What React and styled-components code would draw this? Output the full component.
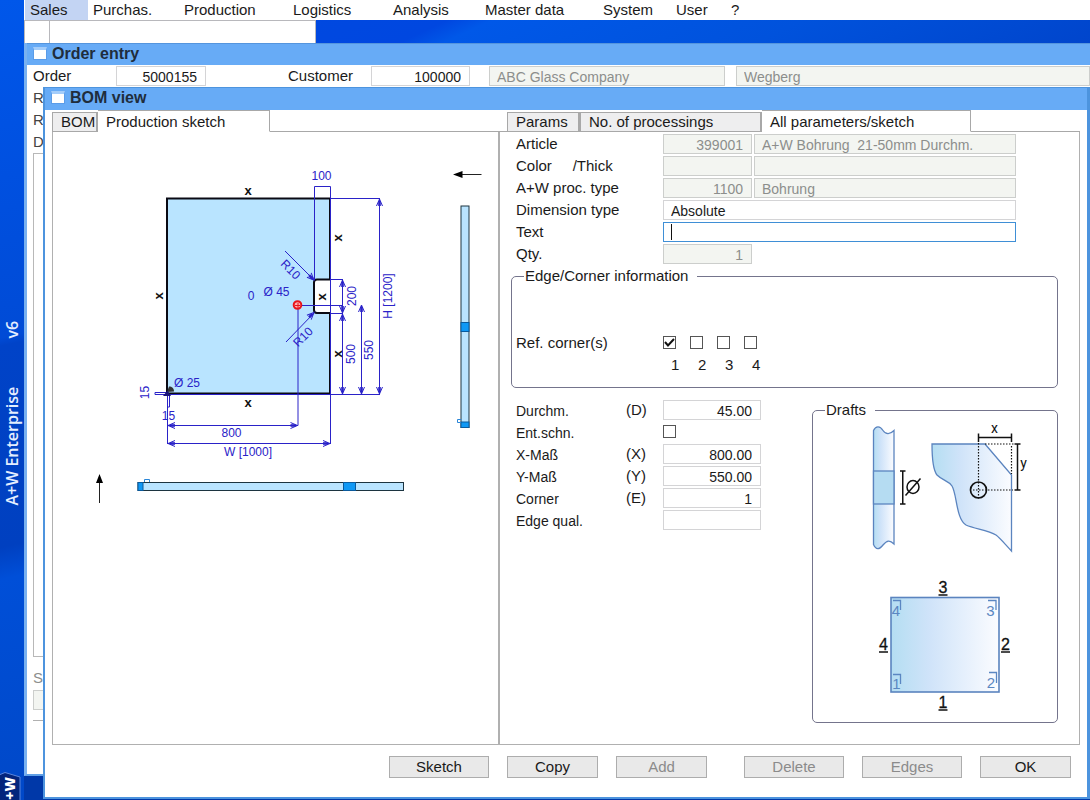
import React from "react";
import styled, { createGlobalStyle } from "styled-components";

const GlobalStyle = createGlobalStyle`
  *, *::before, *::after { box-sizing: border-box; }
  body {
    margin: 0;
    font-family: "Liberation Sans", Arial, sans-serif;
    font-size: 15px;
    line-height: 20px;
    color: #1a1a1a;
    background: #0048d0;
  }
  button, input, select { font: inherit; color: inherit; margin: 0; }
`;

/* ---------- desktop ---------- */

const Desktop = styled.div`
  display: flex;
  min-height: 100vh;
  overflow: hidden;
`;

const Sidebar = styled.aside`
  flex: none;
  width: 24px;
  display: flex;
  flex-direction: column;
  align-items: center;
  justify-content: flex-end;
  color: #fff;
  background: linear-gradient(168deg, #0057ea 0%, #0050e0 22%, #004bd6 42%, #0043c8 43%, #0040c0 68%, #004fd8 72%, #0048c8 100%);
`;

const SideCaption = styled.div`
  display: flex;
  gap: 48px;
  writing-mode: vertical-rl;
  transform: rotate(180deg);
  font-family: "Open Sans", sans-serif;
  font-weight: 600;
  font-size: 16px;
  line-height: 24px;
  color: #e4eeff;
  margin-bottom: 266px;
`;

const Workspace = styled.div`
  flex: 1;
  min-width: 0;
  display: flex;
  flex-direction: column;
`;

const MenuBar = styled.nav`
  display: flex;
  height: 20px;
  padding-left: 1px;
  background: #fff;
`;

const MenuItem = styled.button`
  border: 0;
  padding: 0 0 0 5px;
  width: ${(p) => p.$width}px;
  text-align: left;
  line-height: 20px;
  white-space: nowrap;
  background: ${(p) => (p.$active ? "#c3d4f3" : "transparent")};
`;

const ToolStrip = styled.div`
  display: flex;
  height: 23px;
  background: linear-gradient(155deg, #004ce0 0%, #0047e0 38%, #0058e8 42%, #0052dc 70%, #0045cc 100%);
`;

const ToolBox = styled.div`
  width: ${(p) => p.$width}px;
  border: 1px solid #b8b8bc;
  border-width: 1px 1px 0 1px;
  background: #fff;
  & + & { border-left: 0; }
`;

const WindowStack = styled.main`
  flex: 1;
  display: grid;
  grid-template-columns: minmax(0, 1fr);
  background: #0038a8;
  & > * { grid-area: 1 / 1; }
`;

/* ---------- windows ---------- */

const OrderWindow = styled.section`
  display: flex;
  flex-direction: column;
  min-width: 0;
  margin-bottom: 24px;
  background: #fff;
  border-left: 3px solid #79b1f0;
  border-bottom: 2px solid #5f9fe6;
  overflow: hidden;
`;

const BomWindow = styled.section`
  display: flex;
  flex-direction: column;
  min-width: 0;
  margin: 44px 0 1px 19px;
  background: #fff;
  border: solid #4d94de;
  border-width: 1px 3px 2px 2px;
  z-index: 1;
`;

const TitleBar = styled.header`
  display: flex;
  flex: none;
  gap: 5px;
  height: 22px;
  padding-left: ${(p) => p.$inset}px;
  border-top: ${(p) => (p.$edge ? "1px solid #5595dd" : "0")};
  background: #67abf6;
`;

const WindowIcon = styled.span`
  width: 14px;
  height: 13px;
  margin-top: 3px;
  background: #fff;
  border: 1px solid #5b9ce8;
  border-top: 3px solid #a4cdfa;
`;

const Title = styled.h1`
  margin: 0;
  font-size: 16px;
  line-height: 20px;
  font-weight: 700;
  color: #1f2d3c;
`;

const Input = styled.input`
  min-width: 0;
  width: 100%;
  height: 20px;
  padding: 2px 8px 0 7px;
  border: 1px solid #d4d4d6;
  border-radius: 0;
  outline: 0;
  font-size: 14px;
  line-height: 16px;
  text-align: ${(p) => (p.$right ? "right" : "left")};
  background: #fff;
  &:disabled {
    color: #8c8e8c;
    background: #f3f5f1;
    border-color: #cccecc;
    opacity: 1;
  }
`;

const FocusedInput = styled(Input)`
  border-color: #3f8fd6;
  caret-color: transparent;
  background: linear-gradient(#111, #111) 7px 1px / 1px 16px no-repeat #fff;
`;

const Select = styled.select`
  appearance: none;
  width: 100%;
  height: 20px;
  padding: 2px 7px 0;
  border: 1px solid #d4d4d6;
  border-radius: 0;
  font-size: 14px;
  line-height: 16px;
  background: #fff;
`;

const OrderHeader = styled.div`
  display: grid;
  flex: none;
  grid-template-columns: 83px 90px 82px 83px 99px 19px 236px 11px minmax(0, 1fr);
  align-items: center;
  height: 22px;
  padding-left: 6px;
  & > :nth-child(3) { grid-column: 4; }
  & > :nth-child(5) { grid-column: 7; }
  & > :nth-child(6) { grid-column: 9; }
`;

const OrderLabel = styled.div`
  flex: none;
  height: 22px;
  line-height: 22px;
  padding-left: 6px;
  color: ${(p) => (p.$muted ? "#8c8e8c" : "#444")};
`;

const OrderList = styled.div`
  flex: 1;
  margin: 0 0 10px 6px;
  border: 1px solid #b8b8b8;
`;

const OrderFooter = styled.div`
  flex: none;
  height: 31px;
  margin: 1px 0 53px 6px;
  border-bottom: 1px solid #b0b0b0;
`;

/* ---------- BOM window body ---------- */

const Panes = styled.div`
  flex: 1;
  display: flex;
  padding: 0 7px;
`;

const Pane = styled.div`
  display: flex;
  flex-direction: column;
  min-width: 0;
  flex: ${(p) => (p.$grow ? "1 1 0" : "0 1 446px")};
`;

const TabRow = styled.div`
  display: flex;
  align-items: flex-end;
  height: 22px;
  &::before {
    content: "";
    align-self: stretch;
    width: ${(p) => p.$lead}px;
    border-bottom: 1px solid #a8a8a8;
  }
  &::after {
    content: "";
    flex: 1;
    align-self: stretch;
    border-bottom: 1px solid #a8a8a8;
  }
`;

const Tab = styled.button`
  flex: none;
  width: ${(p) => p.$width}px;
  height: ${(p) => (p.$active ? 22 : 20)}px;
  padding: ${(p) => (p.$active ? "2px 0 0 8px" : "0 0 0 8px")};
  border: 1px solid #a8a8a8;
  border-left-width: ${(p) => (p.$active ? 0 : 1)}px;
  border-bottom-color: ${(p) => (p.$active ? "#fff" : "#a8a8a8")};
  border-right-width: ${(p) => (p.$active ? 1 : 2)}px;
  text-align: left;
  line-height: 18px;
  white-space: nowrap;
  background: ${(p) => (p.$active ? "#fff" : "#eeeeef")};
`;

const SketchPanel = styled.div`
  flex: 1;
  border: solid #b0b0b0;
  border-width: 0 0 1px 1px;
  & > svg { display: block; }
`;

const ParamPanel = styled.div`
  flex: 1;
  padding: 2px 21px 20px 11px;
  border: solid #b0b0b0;
  border-width: 0 1px 1px 2px;
`;

const FieldGrid = styled.div`
  display: grid;
  grid-template-columns: 145px 89px minmax(0, 262px);
  gap: 2px;
  padding-left: 5px;
`;

const FieldLabel = styled.label`
  grid-column: 1;
  line-height: 20px;
  white-space: pre;
`;

const Wide = styled.div`
  display: flex;
  grid-column: 2 / 4;
`;

const Group = styled.fieldset`
  min-width: 0;
  margin: 0;
  padding: 0;
  border: 1px solid #74748c;
  border-radius: 5px;
`;

const Legend = styled.legend`
  margin-left: 12px;
  padding: 0 9px 0 1px;
  line-height: 20px;
`;

const EdgeGroup = styled(Group)`
  margin-top: 2px;
`;

const CornerRow = styled.div`
  display: grid;
  grid-template-columns: 147px repeat(4, 27px);
  padding: 47px 0 12px 4px;
`;

const CornerCell = styled.label`
  display: flex;
  flex-direction: column;
  & > span { padding: 3px 0 0 8px; }
`;

const Check = styled.input.attrs({ type: "checkbox" })`
  appearance: none;
  flex: none;
  width: 13px;
  height: 13px;
  margin: 3px 0;
  border: 1px solid #555;
  background: #fff;
  &:checked {
    background: url("data:image/svg+xml,%3Csvg xmlns='http://www.w3.org/2000/svg' viewBox='0 0 11 11'%3E%3Cpath d='M1 5l3 3.5L10 2' fill='none' stroke='%23111' stroke-width='2'/%3E%3C/svg%3E") center / 11px 11px no-repeat #fff;
  }
`;

const LowerArea = styled.div`
  display: flex;
  align-items: flex-start;
  gap: 51px;
  margin-top: 12px;
  padding-left: 5px;
`;

const DimensionGrid = styled.div`
  flex: none;
  display: grid;
  grid-template-columns: 110px 37px 98px;
  gap: 2px 0;
`;

const DimensionLabel = styled.label`
  grid-column: 1;
  font-size: 14px;
  line-height: 22px;
  height: 20px;
`;

const Code = styled.span`
  line-height: 20px;
`;

const ValueCell = styled.div`
  display: flex;
  grid-column: 3;
  height: 20px;
`;

const DraftGroup = styled(Group)`
  flex: 1;
  & > svg { display: block; margin: 0 auto; }
`;

const ButtonRow = styled.footer`
  display: flex;
  flex: none;
  justify-content: flex-end;
  gap: 37px;
  padding: 11px 16px 19px;
`;

const ButtonSet = styled.div`
  display: flex;
  gap: 18px;
`;

const ActionButton = styled.button`
  width: ${(p) => (p.$wide ? 100 : 91)}px;
  height: 22px;
  padding: 0;
  border: 1px solid #adadad;
  background: #e9e9e9;
  line-height: 20px;
  &:disabled { color: #8b8b8b; }
`;

/* ---------- drawings ---------- */

const BLUE = "#2a22c8";

function Arrow({ x, y, turn }) {
  return (
    <g transform={`translate(${x} ${y}) rotate(${turn})`}>
      <path d="M-3 7L0 0L3 7" fill="none" stroke={BLUE} />
      <path d="M0 2v5" stroke={BLUE} strokeWidth="2.6" />
    </g>
  );
}

function DimText({ x, y, turn = 0, children }) {
  return (
    <text transform={`translate(${x} ${y}) rotate(${turn})`} y="4" fontSize="12" textAnchor="middle" fill={BLUE}>
      {children}
    </text>
  );
}

function EdgeMark({ x, y, turn = 0 }) {
  return (
    <text transform={`translate(${x} ${y}) rotate(${turn})`} y="4" fontSize="13" fontWeight="700" textAnchor="middle" fill="#111">
      x
    </text>
  );
}

function ProductionSketch() {
  return (
    <svg width="440" height="390" viewBox="53 132 440 390" role="img" aria-label="Production sketch">
      <path
        d="M167 198.5H330V279.5H317Q314 279.5 314 282.5V310Q314 313 317 313H330V393.5H167Z"
        fill="#b9e4ff"
        stroke="#0a0a14"
        strokeWidth="2"
      />
      <g fill="none" stroke={BLUE} strokeWidth="1">
        <path d="M314.5 280V186.5H330.5V444" />
        <path d="M330 198.5H380M167 394.5H380" />
        <path d="M379.5 199V394M361.5 306V394M342.5 280V394" />
        <path d="M330 279.5H343M330 313.5H343M297 305.5H343" />
        <path d="M298 305V425.5M167.5 393V444M167 425.5H298M167 443.5H330" />
        <path d="M285 251L313 279M286 342L314 313" />
        <path d="M155 392.5H167V394.5H155ZM167.5 395V407H169.5V395" />
      </g>
      <Arrow x={379.5} y={199} turn={0} />
      <Arrow x={379.5} y={394} turn={180} />
      <Arrow x={361.5} y={305} turn={0} />
      <Arrow x={361.5} y={394} turn={180} />
      <Arrow x={342.5} y={280} turn={0} />
      <Arrow x={342.5} y={313} turn={180} />
      <Arrow x={342.5} y={314} turn={0} />
      <Arrow x={342.5} y={394} turn={180} />
      <Arrow x={168} y={425.5} turn={-90} />
      <Arrow x={297.5} y={425.5} turn={90} />
      <Arrow x={168} y={443.5} turn={-90} />
      <Arrow x={330} y={443.5} turn={90} />
      <Arrow x={314} y={280} turn={135} />
      <Arrow x={314} y={312.5} turn={45} />
      <circle cx="297.5" cy="305" r="3.8" fill="#ffb0b0" stroke="#e8141c" strokeWidth="2" />
      <path d="M295 305.5H300M298 303V308" stroke="#e8141c" />
      <path d="M167 392L174 391.5C174 388 172 386.5 169 386.500Z" fill="#333" />
      <path d="M163 396L167.500 390.500L171 396Z" fill="#1a1478" />
      <DimText x={321.5} y={176}>100</DimText>
      <DimText x={251} y={295.5}>0</DimText>
      <DimText x={276.5} y={291.5}>Ø 45</DimText>
      <DimText x={187} y={382.5}>Ø 25</DimText>
      <DimText x={168.5} y={416}>15</DimText>
      <DimText x={144.5} y={392.5} turn={-90}>15</DimText>
      <DimText x={231.5} y={433}>800</DimText>
      <DimText x={248} y={451.5}>W [1000]</DimText>
      <DimText x={352} y={296} turn={-90}>200</DimText>
      <DimText x={351} y={354} turn={-90}>500</DimText>
      <DimText x={369} y={350} turn={-90}>550</DimText>
      <DimText x={388} y={296} turn={-90}>H [1200]</DimText>
      <DimText x={290.5} y={269.5} turn={45}>R10</DimText>
      <DimText x={303} y={337} turn={-45}>R10</DimText>
      <EdgeMark x={248} y={191} />
      <EdgeMark x={248} y={403} />
      <EdgeMark x={159} y={296} turn={-90} />
      <EdgeMark x={338} y={238} turn={-90} />
      <EdgeMark x={338} y={354} turn={-90} />
      <EdgeMark x={322} y={297} turn={-90} />
      <path d="M461 174.5H481.5M99.5 481V503" stroke="#222" fill="none" />
      <path d="M453 174.5L462.5 171V178ZM99.5 474L96 483H103Z" fill="#000" />
      <g stroke="#1c3440" fill="#b9e4ff">
        <rect x="461" y="206" width="8" height="221.5" />
        <rect x="138" y="482.5" width="265.5" height="8" />
      </g>
      <g stroke="#0a5a9c" fill="#0f98f5">
        <rect x="461" y="322.5" width="8" height="9" />
        <rect x="461" y="422" width="8" height="5.5" />
        <rect x="138" y="482.5" width="5" height="8" />
        <rect x="343.5" y="482.5" width="12" height="8" />
      </g>
      <path d="M144.5 482V479.5H149.5V482M461 419.5H457.5V422.5H461" fill="none" stroke="#2a86d8" />
    </svg>
  );
}

function DraftDrawing() {
  return (
    <svg width="220" height="302" viewBox="825 420 220 302" role="img" aria-label="Drafts">
      <defs>
        <linearGradient id="glass">
          <stop offset="0" stopColor="#b4def2" />
          <stop offset="0.35" stopColor="#cfe3f9" />
          <stop offset="1" stopColor="#fbfcff" />
        </linearGradient>
      </defs>
      <g stroke="#5b84bf" strokeWidth="1.3">
        <path
          d="M873.5 430.5C876 425.5 880 426 883 430.5S890 434.5 894 430.5V544C890 540 887 540 883 545S876 550 873.5 544.5Z"
          fill="url(#glass)"
        />
        <rect x="873.5" y="471" width="20.5" height="33" fill="#b5dcf2" />
        <path
          d="M932 444H985L1011.5 475V551C1004 543 1000 538 996 535C988 530 975 529 966 525C956 519 957 494 952 486C949 481 943 481 937 475C933 470 932 458 932 444Z"
          fill="url(#glass)"
        />
        <rect x="891" y="597.5" width="108" height="94.5" fill="url(#glass)" strokeWidth="1.6" />
      </g>
      <g fill="none" stroke="#111" strokeWidth="1.5">
        <path d="M900 471H905.5M900 504H905.5M902.75 471V504" />
        <ellipse cx="913" cy="487" rx="6" ry="6.5" />
        <path d="M905.5 495.5L920.5 478.5" />
        <circle cx="978.5" cy="490" r="8" strokeWidth="1.7" />
        <path d="M978.5 437.5H1011.5M978.5 433.5V442M1011.5 433.5V442" />
        <path d="M1017.5 444V490M1014.5 444H1020.5M1014.5 490H1020.5" />
        <path d="M978.5 443V499M973 490H1013M985 444H1014M1011.5 446V474" strokeWidth="1.2" strokeDasharray="1.5 1.5" />
      </g>
      <g fill="#111" textAnchor="middle" fontSize="14" fontFamily="Roboto, sans-serif">
        <text x="994.5" y="433">x</text>
        <text x="1023.5" y="468">y</text>
      </g>
      <g fill="#111" stroke="#111" strokeWidth="0.3" textAnchor="middle" fontSize="16">
        <text x="943" y="593">3</text>
        <text x="943" y="708">1</text>
        <text x="883.5" y="650">4</text>
        <text x="1005.5" y="650">2</text>
      </g>
      <path d="M938.5 595H947.5M938.5 710H947.5M879 652H888M1001 652H1010" stroke="#111" strokeWidth="1.5" />
      <g fill="#5b87c2" textAnchor="middle" fontSize="15">
        <text x="896" y="616">4</text>
        <text x="990.5" y="616">3</text>
        <text x="896.5" y="689">1</text>
        <text x="991" y="688">2</text>
      </g>
      <path
        d="M893 600.5H900.5V610M988 600.5H996V610M893 674.5H900.5V684M989 672.5H996.5V683"
        fill="none"
        stroke="#5b87c2"
        strokeWidth="1.3"
      />
    </svg>
  );
}

function BrandMark() {
  return (
    <svg width="24" height="28" viewBox="0 0 24 28" aria-label="A+W">
      <path d="M-1 3L5 0.500L20 5V29H-1Z" fill="#03257c" stroke="#5b86dc" />
      <text transform="translate(15 5) rotate(-90)" fontSize="14" fontWeight="800" fill="#fff" fontFamily="Open Sans, sans-serif" textAnchor="end">
        +W
      </text>
    </svg>
  );
}

/* ---------- app ---------- */

const MENU = [
  ["Sales", 63],
  ["Purchas.", 91],
  ["Production", 109],
  ["Logistics", 100],
  ["Analysis", 92],
  ["Master data", 118],
  ["System", 73],
  ["User", 55],
  ["?", 30],
];

const DIMENSIONS = [
  { id: "durchm", label: "Durchm.", code: "(D)", value: "45.00" },
  { id: "entschn", label: "Ent.schn.", check: true },
  { id: "xmass", label: "X-Maß", code: "(X)", value: "800.00" },
  { id: "ymass", label: "Y-Maß", code: "(Y)", value: "550.00" },
  { id: "corner", label: "Corner", code: "(E)", value: "1" },
  { id: "edgequal", label: "Edge qual.", value: "" },
];

export default function App() {
  return (
    <>
      <GlobalStyle />
      <Desktop>
        <Sidebar>
          <SideCaption>
            <span>A+W Enterprise</span>
            <span>v6</span>
          </SideCaption>
          <BrandMark />
        </Sidebar>
        <Workspace>
          <MenuBar>
            {MENU.map(([name, width], i) => (
              <MenuItem key={name} $width={width} $active={i === 0}>
                {name}
              </MenuItem>
            ))}
          </MenuBar>
          <ToolStrip>
            <ToolBox $width={26} />
            <ToolBox $width={266} />
          </ToolStrip>
          <WindowStack>
            <OrderWindow>
              <TitleBar $inset={6} $edge>
                <WindowIcon />
                <Title>Order entry</Title>
              </TitleBar>
              <OrderHeader>
                <label htmlFor="order">Order</label>
                <Input id="order" $right defaultValue="5000155" />
                <label htmlFor="customer">Customer</label>
                <Input id="customer" $right defaultValue="100000" />
                <Input aria-label="Customer name" disabled defaultValue="ABC Glass Company" />
                <Input aria-label="City" disabled defaultValue="Wegberg" />
              </OrderHeader>
              <OrderLabel>R</OrderLabel>
              <OrderLabel>R</OrderLabel>
              <OrderLabel>D</OrderLabel>
              <OrderList />
              <OrderLabel $muted>S</OrderLabel>
              <OrderFooter>
                <Input aria-label="Status" disabled />
              </OrderFooter>
            </OrderWindow>

            <BomWindow>
              <TitleBar $inset={6}>
                <WindowIcon />
                <Title>BOM view</Title>
              </TitleBar>
              <Panes>
                <Pane>
                  <TabRow role="tablist" $lead={0}>
                    <Tab role="tab" $width={46}>BOM</Tab>
                    <Tab role="tab" aria-selected="true" $width={172} $active>Production sketch</Tab>
                  </TabRow>
                  <SketchPanel role="tabpanel">
                    <ProductionSketch />
                  </SketchPanel>
                </Pane>
                <Pane $grow>
                  <TabRow role="tablist" $lead={9}>
                    <Tab role="tab" $width={73}>Params</Tab>
                    <Tab role="tab" $width={182}>No. of processings</Tab>
                    <Tab role="tab" aria-selected="true" $width={209} $active>All parameters/sketch</Tab>
                  </TabRow>
                  <ParamPanel role="tabpanel">
                    <FieldGrid>
                      <FieldLabel htmlFor="article">Article</FieldLabel>
                      <Input id="article" $right disabled defaultValue="399001" />
                      <Input aria-label="Article name" disabled defaultValue="A+W Bohrung  21-50mm Durchm." />
                      <FieldLabel htmlFor="color">{"Color     /Thick"}</FieldLabel>
                      <Input id="color" disabled />
                      <Input aria-label="Thickness" disabled />
                      <FieldLabel htmlFor="proc">A+W proc. type</FieldLabel>
                      <Input id="proc" $right disabled defaultValue="1100" />
                      <Input aria-label="Processing name" disabled defaultValue="Bohrung" />
                      <FieldLabel htmlFor="dimtype">Dimension type</FieldLabel>
                      <Wide>
                        <Select id="dimtype" defaultValue="Absolute">
                          <option>Absolute</option>
                        </Select>
                      </Wide>
                      <FieldLabel htmlFor="text">Text</FieldLabel>
                      <Wide>
                        <FocusedInput id="text" />
                      </Wide>
                      <FieldLabel htmlFor="qty">Qty.</FieldLabel>
                      <Input id="qty" $right disabled defaultValue="1" />
                    </FieldGrid>

                    <EdgeGroup>
                      <Legend>Edge/Corner information</Legend>
                      <CornerRow>
                        <span>Ref. corner(s)</span>
                        {[1, 2, 3, 4].map((n) => (
                          <CornerCell key={n}>
                            <Check defaultChecked={n === 1} />
                            <span>{n}</span>
                          </CornerCell>
                        ))}
                      </CornerRow>
                    </EdgeGroup>

                    <LowerArea>
                      <DimensionGrid>
                        {DIMENSIONS.map((d) => (
                          <React.Fragment key={d.id}>
                            <DimensionLabel htmlFor={d.id}>{d.label}</DimensionLabel>
                            {d.code && <Code>{d.code}</Code>}
                            <ValueCell>
                              {d.check ? <Check id={d.id} /> : <Input id={d.id} $right defaultValue={d.value} />}
                            </ValueCell>
                          </React.Fragment>
                        ))}
                      </DimensionGrid>
                      <DraftGroup>
                        <Legend>Drafts</Legend>
                        <DraftDrawing />
                      </DraftGroup>
                    </LowerArea>
                  </ParamPanel>
                </Pane>
              </Panes>
              <ButtonRow>
                <ButtonSet>
                  <ActionButton $wide>Sketch</ActionButton>
                  <ActionButton>Copy</ActionButton>
                  <ActionButton disabled>Add</ActionButton>
                </ButtonSet>
                <ButtonSet>
                  <ActionButton $wide disabled>Delete</ActionButton>
                  <ActionButton $wide disabled>Edges</ActionButton>
                  <ActionButton>OK</ActionButton>
                </ButtonSet>
              </ButtonRow>
            </BomWindow>
          </WindowStack>
        </Workspace>
      </Desktop>
    </>
  );
}
